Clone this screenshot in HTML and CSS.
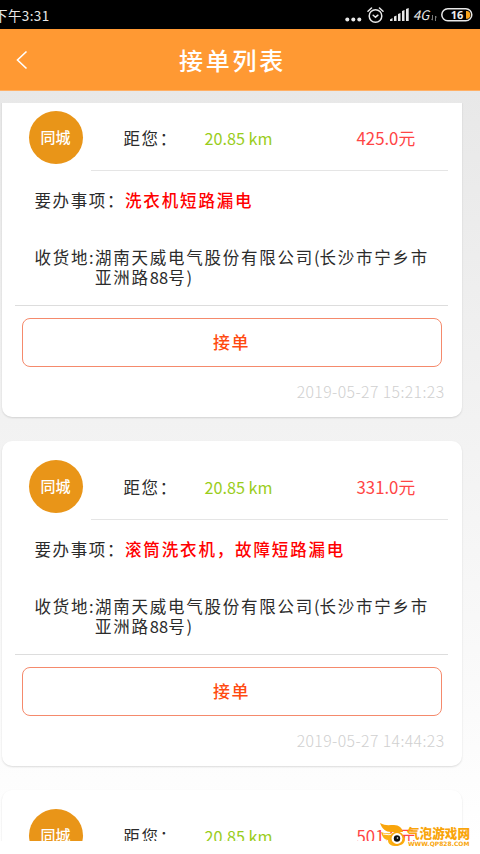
FILE: index.html
```html
<!DOCTYPE html>
<html lang="zh-CN">
<head>
<meta charset="utf-8">
<title>接单列表</title>
<link rel="stylesheet" href="styles.css">
</head>
<body>
<div class="status">
  <span class="time">下午3:31</span>
  <svg class="dots" width="17" height="5" viewBox="0 0 17 5" fill="#e8e8e8"><circle cx="2.3" cy="2.5" r="2"/><circle cx="8.3" cy="2.5" r="2"/><circle cx="14.3" cy="2.5" r="2"/></svg>
  <svg class="alarm" width="17" height="17" viewBox="0 0 17 17" fill="none" stroke="#e8e8e8" stroke-width="1.5" stroke-linecap="round"><circle cx="8.5" cy="9" r="6.3"/><path d="M1 4.2 4.5 1M16 4.2 12.5 1M6.2 8.2l2.3 2 2.4-2"/></svg>
  <svg class="signal" width="19" height="14" viewBox="0 0 19 14" fill="#e8e8e8"><path d="M0 11.500l2.500-1.500v3H0zM4 8.500l2.500-1V13H4zM8 6l2.500-1v8H8zM12 3l2.500-1v11H12zM16 1l2.700-1v13H16z"/></svg>
  <span class="net">4G</span>
  <svg class="arrows" width="6" height="6" viewBox="0 0 6 6" fill="none" stroke="#888" stroke-width=".9"><path d="M1.5 0v5M.3 3.8l1.2 1.5M4.5 6V1M4.5 1l1.2 1.5"/></svg>
  <svg class="battery" width="33" height="14" viewBox="0 0 33 14"><rect x=".8" y=".8" width="30" height="12" rx="6" fill="none" stroke="#e8e8e8" stroke-width="1.5"/><path d="M25 3h1.200a4 4 0 0 1 0 7.800H25z" fill="#f9a31a"/><text class="level" x="16" y="11" text-anchor="middle">16</text></svg>
</div>
<header class="nav">
  <svg class="back" width="14" height="20" viewBox="0 0 14 20" fill="none" stroke="#fff" stroke-width="1.6"><path d="M11.500 1.500 2.500 10l9 8.500"/></svg>
  <h1 class="title">接单列表</h1>
</header>
<main class="viewport">
  <div class="list">
    <article class="card">
      <div class="summary">
        <span class="badge">同城</span>
        <div class="facts"><span class="label">距您：</span><span class="distance">20.85 km</span><span class="price">425.0元</span></div>
      </div>
      <div class="task"><span class="label">要办事项：</span><span class="subject">洗衣机短路漏电</span></div>
      <div class="address"><span class="key">收货地:</span><span class="place">湖南天威电气股份有限公司<span class="paren">(</span>长沙市宁乡市<br>亚洲路<span class="number">88</span>号)</span></div>
      <button class="accept">接单</button>
      <time class="date">2019-05-27 15:21:23</time>
    </article>
    <article class="card">
      <div class="summary">
        <span class="badge">同城</span>
        <div class="facts"><span class="label">距您：</span><span class="distance">20.85 km</span><span class="price">331.0元</span></div>
      </div>
      <div class="task"><span class="label">要办事项：</span><span class="subject">滚筒洗衣机，故障短路漏电</span></div>
      <div class="address"><span class="key">收货地:</span><span class="place">湖南天威电气股份有限公司<span class="paren">(</span>长沙市宁乡市<br>亚洲路<span class="number">88</span>号)</span></div>
      <button class="accept">接单</button>
      <time class="date">2019-05-27 14:44:23</time>
    </article>
    <article class="card">
      <div class="summary">
        <span class="badge">同城</span>
        <div class="facts"><span class="label">距您：</span><span class="distance">20.85 km</span><span class="price">501.0元</span></div>
      </div>
    </article>
  </div>
</main>
<div class="watermark">
  <svg width="32" height="24" viewBox="0 0 32 24"><path d="M0 0c5 3 9 2 14 2 5 0 8 3 9 7H11C6 9 2 6 0 0z" fill="#f9a50b"/><path d="M1 9c4 2 9 1 13 1 6 0 10 2 11 6 0 5-5 7-9 7-5 0-8-2-8-6C4 17 2 13 1 9z" fill="#fbb012"/><path d="M3 11q6 2 12-1" stroke="#fff" fill="none"/><circle cx="17" cy="15.500" r="6.200" fill="#fff" stroke="#f9a50b" stroke-width="1.500"/><circle cx="17" cy="15.500" r="3.200" fill="#111"/><circle cx="17.500" cy="15" r=".8" fill="#fff"/></svg>
  <div class="brand"><span class="name">气泡游戏网</span><span class="site">WWW.QP828.COM</span></div>
</div>
</body>
</html>
```
FILE: styles.css
```css
* { box-sizing: border-box; }
body {
  margin: 0;
  width: 480px;
  height: 854px;
  overflow: hidden;
  position: relative;
  display: flex;
  flex-direction: column;
  background: linear-gradient(#e8e8e8 90px, #f2f2f2 420px, #fdfdfd 780px, #fff 842px);
  font-family: "Noto Sans CJK SC", sans-serif;
  color: #2b2b2b;
}
svg { flex: none; display: block; }
.status {
  height: 29px;
  flex: none;
  background: #000;
  color: #e8e8e8;
  display: flex;
  align-items: center;
}
.time { font-size: 13.5px; line-height: 28px; margin-left: -6px; margin-right: auto; white-space: nowrap; letter-spacing: .4px; }
.dots { margin: 9px 5px 0 0; }
.alarm { margin: 1px 6px 0 0; }
.signal { margin: 1px 4px 0 0; }
.net { width: 17px; font-size: 13px; line-height: 28px; font-style: italic; }
.arrows { margin: 7px 4px 0 1px; }
.battery { margin-right: 6px; }
.level { font: bold 11px "Noto Sans", sans-serif; fill: #eee; }
.nav {
  height: 62px;
  flex: none;
  display: grid;
  grid-template-columns: 80px 1fr 80px;
  align-items: center;
  background: #ff9933;
  border-bottom: 1px solid #ffb066;
}
.back { margin-left: 15px; }
.title { margin: 0; color: #fff; font-size: 24px; font-weight: 500; letter-spacing: 2.7px; text-align: center; line-height: 60px; margin-left: -15px; }
.viewport { margin-top: 12px; height: 738px; flex: none; overflow: hidden; }
.list { margin-top: -11px; display: flex; flex-direction: column; gap: 24px; padding-left: 1.5px; }
.card {
  width: 460px;
  height: 325px;
  flex: none;
  background: #fff;
  border-radius: 10px;
  box-shadow: 0 1px 2px #00000022;
  display: flex;
  flex-direction: column;
  font-size: 16.5px;
}
.summary { height: 79px; display: flex; padding: 0 14px 0 27px; flex: none; }
.badge {
  width: 54px;
  height: 53px;
  margin: 19px 8px 0 0;
  border-radius: 50%;
  background: #e99518;
  color: #fff;
  font-size: 15px;
  font-weight: 500;
  line-height: 52px;
  text-align: center;
}
.facts {
  flex: 1;
  display: grid;
  grid-template-columns: 81px 152px 1fr;
  padding: 34px 0 0 33px;
  line-height: 24px;
  border-bottom: 1px solid #e5e5e5;
}
.label { letter-spacing: 1.6px; white-space: nowrap; }
.distance { color: #9acd1c; font-size: 16.2px; }
.price { color: #ff4545; font-size: 16.8px; }
.task { display: flex; height: 58px; line-height: 58px; padding-left: 33px; flex: none; }
.task .label { width: 90.5px; }
.subject { color: #f00; font-weight: 500; letter-spacing: 1.85px; white-space: nowrap; }
.address { display: flex; height: 77px; margin: 0 14px 0 13.5px; padding: 19px 0 0 19.5px; line-height: 19.5px; border-bottom: 1px solid #ddd; flex: none; }
.key { width: 60.5px; flex: none; letter-spacing: 1.7px; white-space: nowrap; }
.place { letter-spacing: 1.75px; white-space: nowrap; }
.paren { letter-spacing: 0; }
.number { letter-spacing: .1px; }
.accept {
  margin: 12px 20px 0;
  height: 49px;
  flex: none;
  padding: 0 0 2px;
  border: 1px solid #f58a6c;
  border-radius: 8px;
  background: #fff;
  color: #ff4a10;
  font: 500 17px "Noto Sans CJK SC", sans-serif;
  letter-spacing: 1.5px;
}
.date { align-self: flex-end; margin: 13px 17px 0 0; color: #d0d0d0; font-size: 15.8px; font-weight: 300; letter-spacing: .4px; line-height: 24px; }
.watermark { position: absolute; left: 380px; top: 823px; display: flex; }
.brand { margin-left: -5px; padding-top: 2px; color: #f9a50b; display: flex; flex-direction: column; }
.name { font-size: 12.6px; font-weight: 900; line-height: 15px; white-space: nowrap; }
.site { font: bold 6px/8px "DejaVu Sans", sans-serif; margin-left: 1px; white-space: nowrap; }
```
